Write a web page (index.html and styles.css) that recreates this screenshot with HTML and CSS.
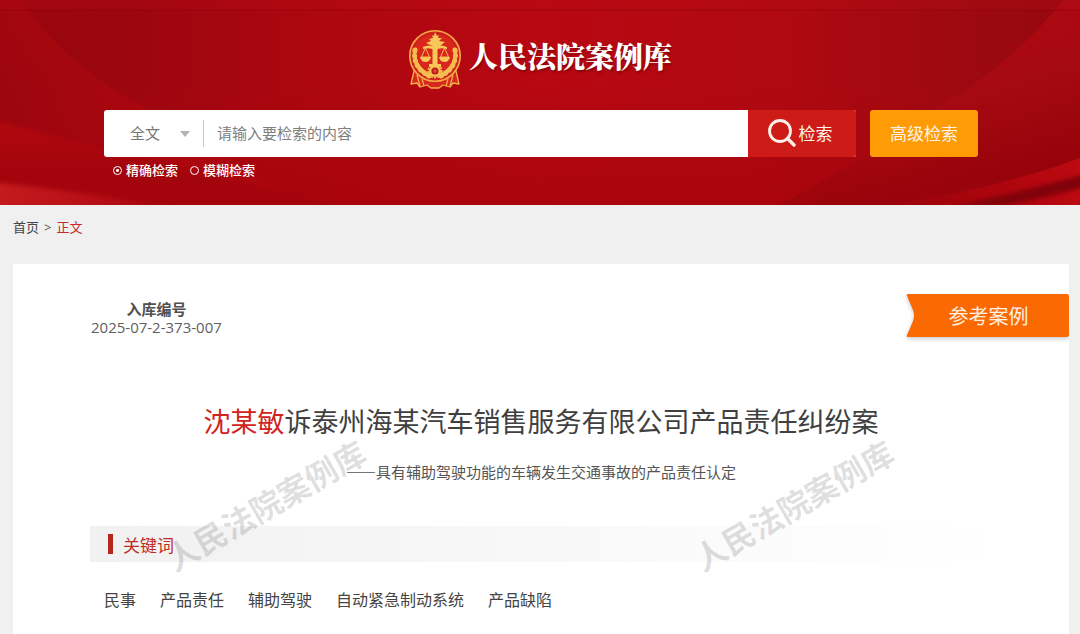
FILE: index.html
```html
<!DOCTYPE html>
<html lang="zh-CN">
<head>
<meta charset="utf-8">
<meta name="viewport" content="width=device-width, initial-scale=1">
<title>人民法院案例库</title>
<link rel="stylesheet" href="styles.css">
</head>
<body>
<header class="banner">
  <svg class="banner-art" viewBox="0 0 1080 205" preserveAspectRatio="none" aria-hidden="true">
    <defs>
      <linearGradient id="base" x1="0" y1="0" x2="1" y2="0">
        <stop offset="0" stop-color="#98060e"/><stop offset=".12" stop-color="#9c060f"/>
        <stop offset=".28" stop-color="#ac070f"/><stop offset=".5" stop-color="#b80812"/>
        <stop offset=".72" stop-color="#b00911"/><stop offset=".9" stop-color="#9c0910"/>
        <stop offset="1" stop-color="#98070e"/>
      </linearGradient>
      <linearGradient id="floor" x1="0" y1="0" x2="0" y2="1">
        <stop offset=".4" stop-color="#a8040c" stop-opacity="0"/><stop offset="1" stop-color="#a8040c" stop-opacity=".8"/>
      </linearGradient>
      <linearGradient id="leftFold" gradientUnits="userSpaceOnUse" x1="20" y1="120" x2="110" y2="50">
        <stop offset="0" stop-color="#9e060f"/><stop offset="1" stop-color="#b0070f"/>
      </linearGradient>
      <linearGradient id="leftWave" gradientUnits="userSpaceOnUse" x1="0" y1="120" x2="0" y2="170">
        <stop offset="0" stop-color="#b2080f"/><stop offset="1" stop-color="#a4050d"/>
      </linearGradient>
      <linearGradient id="leftGlow" gradientUnits="userSpaceOnUse" x1="0" y1="190" x2="190" y2="205">
        <stop offset="0" stop-color="#c41a1e"/><stop offset="1" stop-color="#a8050d"/>
      </linearGradient>
      <linearGradient id="rightFold" gradientUnits="userSpaceOnUse" x1="1010" y1="30" x2="1040" y2="160">
        <stop offset="0" stop-color="#b40a14"/><stop offset=".4" stop-color="#aa0a12"/><stop offset="1" stop-color="#94020a"/>
      </linearGradient>
      <linearGradient id="rightWave" gradientUnits="userSpaceOnUse" x1="900" y1="205" x2="1080" y2="165">
        <stop offset="0" stop-color="#b0040c" stop-opacity=".2"/><stop offset="1" stop-color="#be0a12"/>
      </linearGradient>
      <filter id="soft" filterUnits="userSpaceOnUse" x="-40" y="100" width="1200" height="150" color-interpolation-filters="sRGB"><feGaussianBlur stdDeviation="2"/></filter>
    </defs>
    <rect width="1080" height="205" fill="url(#base)"/>
    <rect width="1080" height="205" fill="url(#floor)"/>
    <path d="M0 0H22Q60 62 145 108Q200 140 300 205H0Z" fill="url(#leftFold)" opacity=".7"/>
    <path d="M-20 116Q90 145 160 162T340 205V230H-20Z" fill="url(#leftWave)" filter="url(#soft)"/>
    <path d="M-20 181Q70 189 190 212V230H-20Z" fill="url(#leftGlow)" filter="url(#soft)"/>
    <path d="M1064 0Q1010 65 938 108Q880 150 780 205H1080V0Z" fill="url(#rightFold)" opacity=".7"/>
    <path d="M1080 158Q1000 188 890 205H1080Z" fill="url(#rightWave)"/>
    <path d="M1100 170Q1030 190 955 206H1000Q1050 198 1100 182Z" fill="#80020a" filter="url(#soft)"/>
    <rect width="1080" height="10" fill="#c01018" opacity=".2"/>
    <rect y="9" width="1080" height="2" fill="#800008" opacity=".2"/>
  </svg>

  <div class="banner-inner">
    <h1 class="brand">
      <svg class="emblem" viewBox="3 4 54 61" aria-hidden="true">
        <g fill="#d8281e" stroke="#f2b04a" stroke-width="1.3" stroke-linejoin="round">
          <path d="M9 46L6 59L12 58L15 62L22 60L26 63H34L38 60L45 62L48 58L54 59L51 46Z"/>
          <path d="M12 50L15 61M17 54L19 61M43 54L41 61M48 50L45 61" fill="none"/>
        </g>
        <circle cx="30" cy="31" r="25.2" fill="#d9261d" stroke="#f2ac48" stroke-width="1.6"/>
        <circle cx="30" cy="31" r="22.8" fill="none" stroke="#b81616" stroke-width=".8"/>
        <g fill="none" stroke="#f5bd50" stroke-linecap="round">
          <path d="M10 25Q7 42 24 51" stroke-width="5" stroke-dasharray="1 4.200"/>
          <path d="M50 25Q53 42 36 51" stroke-width="5" stroke-dasharray="1 4.200"/>
          <path d="M10 25Q8 41 25 50M50 25Q52 41 35 50" stroke-width="2.4"/>
        </g>
        <g fill="#f9c85a">
          <path d="M30 7L32 11L34 10L33 13L37 13L34 16L40 17L35 21H32.500V39H36V42H24V39H27.500V21L21 18L26 16L24 14L28 13L27 10L29 11Z"/>
          <path d="M18 22Q24 19 30 22Q36 19 42 22V24Q36 22 30 25Q24 22 18 24Z"/>
          <path d="M15 32H26Q25 37 20.500 37T15 32ZM34 32H45Q44 37 39.500 37T34 32Z"/>
        </g>
        <path d="M20.500 23L16.500 32H24.500ZM39.500 23L35.500 32H43.500Z" fill="none" stroke="#f5bd50" stroke-width="1"/>
        <circle cx="30" cy="46" r="6.800" fill="none" stroke="#f8c456" stroke-width="1.6" stroke-dasharray="2 1.200"/>
        <circle cx="30" cy="46" r="4.800" fill="#b81c18" stroke="#f8c456" stroke-width="2.4"/>
        <circle cx="30" cy="46" r="1.800" fill="#e04a28"/>
      </svg>
      <span class="brand-name">人民法院案例库</span>
    </h1>

    <form class="search" onsubmit="return false">
      <div class="search-row">
        <div class="search-box">
          <div class="scope">
            <select class="scope-select" aria-label="检索范围"><option>全文</option></select>
            <svg class="scope-arrow" viewBox="0 0 10 6" aria-hidden="true"><path d="M0 0H10L5 6Z" fill="#b4b4b4"/></svg>
          </div>
          <input class="search-input" type="text" aria-label="检索内容" placeholder="请输入要检索的内容">
          <button class="search-btn" type="submit">
            <svg class="search-icon" viewBox="0 0 28 28" fill="none" stroke="#fff0e8" aria-hidden="true"><circle cx="12" cy="12" r="10.5" stroke-width="2.8"/><path d="M19.5 19.5L26 26" stroke-width="3.4" stroke-linecap="round"/></svg>
            检索
          </button>
        </div>
        <button class="advanced-btn" type="button">高级检索</button>
      </div>
      <div class="modes">
        <label class="mode"><input class="mode-radio" type="radio" name="mode" checked>精确检索</label>
        <label class="mode"><input class="mode-radio" type="radio" name="mode">模糊检索</label>
      </div>
    </form>
  </div>
</header>

<nav class="crumbs" aria-label="位置">
  <a class="crumb" href="#">首页</a><span>&gt;</span><a class="crumb crumb-current" href="#">正文</a>
</nav>

<main class="card">
  <div class="card-top">
    <div class="case-id"><strong class="case-id-label">入库编号</strong><span>2025-07-2-373-007</span></div>
    <div class="ribbon">
      <svg class="ribbon-shape" viewBox="0 0 163 43" preserveAspectRatio="none" aria-hidden="true"><path d="M2 0H161Q163 0 163 2V41Q163 43 161 43H2Q0 43 1 41L7 27Q9 21.500 7 16L1 2Q0 0 2 0Z" fill="#fb6a02"/></svg>
      <span class="ribbon-text">参考案例</span>
    </div>
  </div>
  <h2 class="title"><span class="title-mark">沈某敏</span>诉泰州海某汽车销售服务有限公司产品责任纠纷案</h2>
  <p class="subtitle">——具有辅助驾驶功能的车辆发生交通事故的产品责任认定</p>
  <section class="keywords">
    <h3 class="section-head">关键词</h3>
    <ul class="tags">
      <li>民事</li><li>产品责任</li><li>辅助驾驶</li><li>自动紧急制动系统</li><li>产品缺陷</li>
    </ul>
  </section>
  <div class="watermarks" aria-hidden="true">
    <span class="watermark">人民法院案例库</span>
    <span class="watermark">人民法院案例库</span>
  </div>
</main>
</body>
</html>
```
FILE: styles.css
```css
* { box-sizing: border-box; }

body {
  margin: 0;
  min-height: 100vh;
  display: flex;
  flex-direction: column;
  background: #f0f0f0;
  color: #444;
  font-family: "Open Sans", "Noto Sans CJK SC", sans-serif;
  font-size: 15px;
}

h1, h2, h3, p, ul { margin: 0; padding: 0; font-weight: 400; }
button, input, select { font: inherit; margin: 0; border: 0; }
button { cursor: pointer; }

.banner { position: relative; padding-left: 2px; background: #b0070f; overflow: hidden; }
.banner-art { position: absolute; inset: 0; width: 100%; height: 100%; }
.banner-inner {
  position: relative;
  max-width: 874px;
  margin: 0 auto;
  padding: 29px 0 25px;
}

.brand { display: flex; justify-content: center; align-items: flex-start; gap: 7px; padding-right: 2px; }
.emblem { width: 54px; height: 61px; }
.brand-name {
  color: #fff;
  font-family: "Noto Serif CJK SC", "Noto Serif SC", "Noto Sans CJK SC", serif;
  font-size: 29px;
  font-weight: 900;
  line-height: 54px;
  text-shadow: 1px 2px 2px rgba(90, 0, 0, .5);
}

.search { margin-top: 20px; }
.search-row { display: flex; gap: 14px; height: 47px; }
.search-box { flex: 1; display: flex; min-width: 0; background: #fff; border-radius: 3px; overflow: hidden; }
.scope { position: relative; width: 100px; margin: 10px 0; border-right: 1px solid #c4c4c4; }
.scope-select {
  appearance: none;
  width: 100%;
  height: 100%;
  padding: 0 0 2px 26px;
  background: transparent;
  color: #777;
}
.scope-arrow { position: absolute; right: 13px; top: 11px; width: 10px; height: 6px; pointer-events: none; }
.search-input { flex: 1; min-width: 0; padding: 0 13px 2px; background: transparent; color: #555; outline: 0; }
.search-input::placeholder { color: #808080; opacity: 1; }
.search-btn, .advanced-btn { width: 108px; flex: none; color: #fff2e6; font-size: 17px; padding: 0 0 2px; }
.search-btn { display: flex; align-items: center; justify-content: center; gap: 3px; padding-right: 4px; background: #cd1c18; }
.search-icon { width: 28px; height: 28px; }
.advanced-btn { background: #ff9b05; border-radius: 3px; }

.modes { display: flex; gap: 12px; padding: 3px 0 0 9px; color: #fff; font-size: 13px; font-weight: 500; line-height: 20px; }
.mode { display: flex; align-items: center; gap: 4px; }
.mode-radio {
  appearance: none;
  width: 9px;
  height: 9px;
  border: 1px solid #fff;
  border-radius: 50%;
}
.mode-radio:checked { background: radial-gradient(circle, #fff 0 1px, transparent 2px); }

.crumbs { display: flex; gap: 5px; padding: 12px 13px 27px; font-size: 13px; line-height: 20px; color: #555; }
.crumb { color: #444; text-decoration: none; }
.crumb-current { color: #c8282c; }

.card {
  position: relative;
  flex: 1;
  margin: 0 11px 0 13px;
  padding: 30px 0 22px;
  background: #fff;
  overflow: hidden;
}
.card-top { display: flex; justify-content: space-between; align-items: flex-start; padding-left: 78px; }
.case-id { display: flex; flex-direction: column; align-items: center; padding-top: 6px; line-height: 18px; color: #606060; }
.case-id-label { color: #505050; font-weight: 700; }
.ribbon { position: relative; width: 163px; height: 43px; display: flex; align-items: center; justify-content: center; }
.ribbon-shape { position: absolute; inset: 0; width: 100%; height: 100%; filter: drop-shadow(0 2px 2px rgba(0, 0, 0, .2)); }
.ribbon-text { position: relative; padding-left: 2px; color: #fff0e0; font-size: 20px; }

.title { margin-top: 65px; text-align: center; font-size: 27px; font-weight: 400; line-height: 40px; color: #404040; }
.title-mark { color: #cf2420; }
.subtitle { margin-top: 18px; text-align: center; font-family: "Noto Sans CJK SC", sans-serif; line-height: 24px; color: #555; }

.keywords { margin: 42px 77px 0; }
.section-head {
  display: flex;
  align-items: center;
  gap: 10px;
  height: 36px;
  padding-left: 18px;
  background: linear-gradient(90deg, #f1f1f1, #fff);
  color: #bf2c26;
  font-size: 17px;
}
.section-head::before { content: ""; width: 5px; height: 20px; background: #b5261e; }
.tags { display: flex; flex-wrap: wrap; gap: 24px; margin-top: 26px; padding-left: 14px; list-style: none; font-size: 16px; line-height: 24px; }

/* Tiled watermark laid over the document */
.watermarks {
  position: absolute;
  top: 218px;
  left: -11px;
  width: 100%;
  display: grid;
  grid-template-columns: 1fr 1fr;
  justify-items: center;
  pointer-events: none;
}
.watermark { color: rgba(0, 0, 0, .13); font-size: 32px; font-weight: 700; line-height: 48px; white-space: nowrap; transform: rotate(-30deg); }
```
